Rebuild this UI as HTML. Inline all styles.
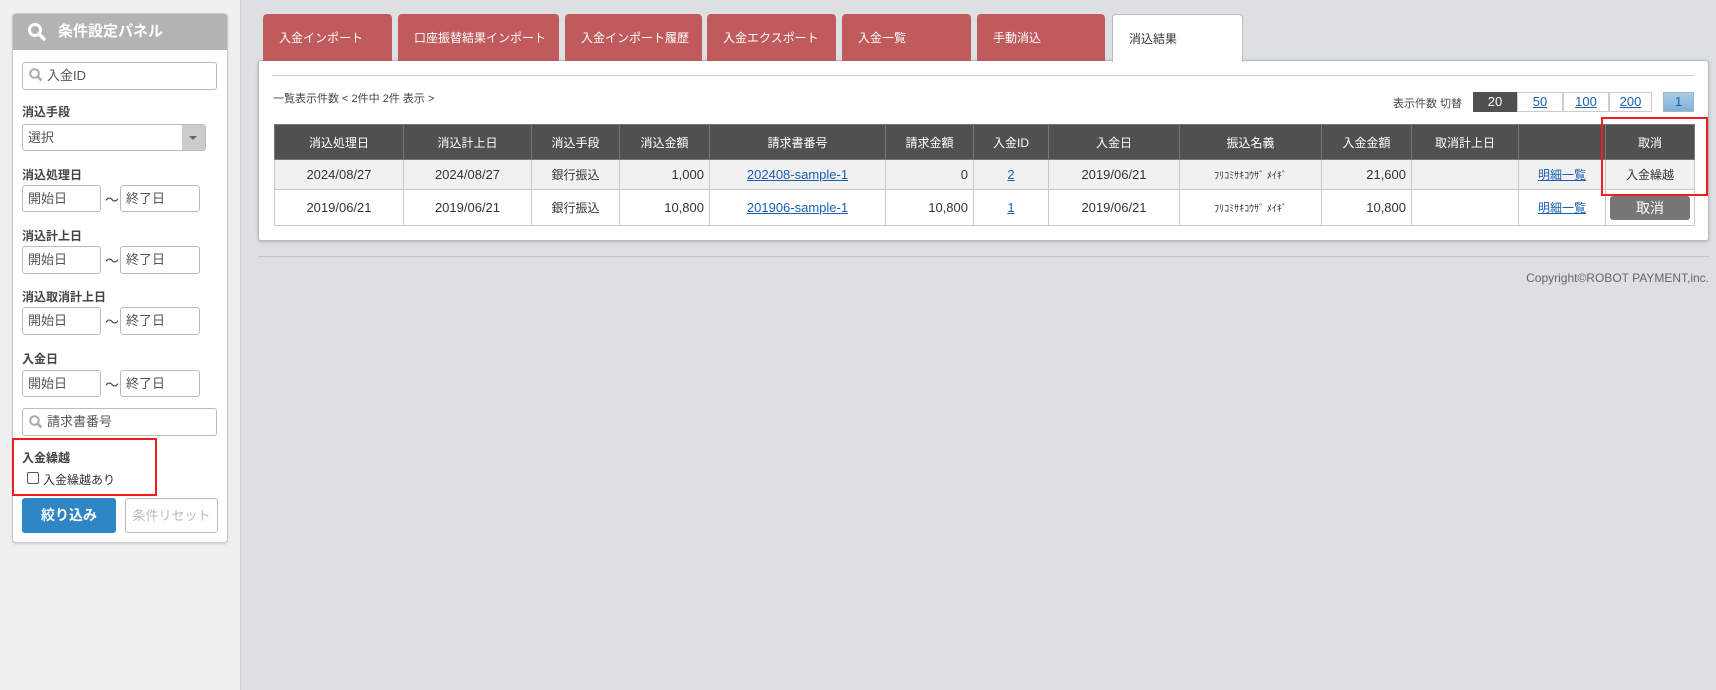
<!DOCTYPE html>
<html><head><meta charset="utf-8"><style>
*{box-sizing:border-box;margin:0;padding:0}
body{width:1716px;height:690px;background:#dce0e3;font-family:"Liberation Sans","Noto Sans CJK JP",sans-serif;color:#333;position:relative;overflow:hidden;font-size:12px}
.abs{position:absolute}
.side{left:0;top:0;width:241px;height:690px;background:#f0f0f0;border-right:1px solid #d0d0d0}
.panel{left:12px;top:13px;width:216px;height:530px;background:#fff;border:1px solid #ccc;border-radius:4px;box-shadow:0 1px 2px rgba(0,0,0,.15)}
.ph{left:0;top:0;width:214px;height:36px;background:#b3b3b3;border-radius:3px 3px 0 0;color:#fff;font-weight:bold;font-size:15px;line-height:36px;padding-left:45px}
.inp{background:#fff;border:1px solid #bbb;border-radius:3px;font-size:13px;color:#555;line-height:26px;padding-left:5px}
.lbl{font-size:12px;font-weight:bold;color:#444}
.til{font-size:14px;color:#444}
.tab{top:14px;height:47px;background:#c05a5c;border-radius:4px 4px 0 0;color:#fff;font-size:12px;padding:15px 0 0 16px}
.card{left:258px;top:60px;width:1451px;height:181px;background:#fff;border:1px solid #bbb;border-radius:3px;box-shadow:0 1px 3px rgba(0,0,0,.2)}
table{border-collapse:collapse;position:absolute;left:274px;top:124px;table-layout:fixed}
td,th{border:1px solid #c8c8c8;font-size:12px;text-align:center;padding:0 5px}
th{background:#505050;color:#fff;height:35px;font-weight:normal;border-color:#777}
td{height:30px;font-size:13px}
tr.g td{background:#f1f1f1}
.r{text-align:right}
a{color:#1a5fb0;text-decoration:underline}
.pg{top:92px;height:20px;border:1px solid #ccc;text-align:center;line-height:18px;font-size:13px}
</style></head><body>
<div class="abs side"></div>
<div class="abs panel">
<div class="abs ph">条件設定パネル</div>
<svg class="abs" style="left:14px;top:8px" width="20" height="20" viewBox="0 0 20 20"><circle cx="8" cy="8" r="5.5" stroke="#fff" stroke-width="3" fill="none"/><path d="M12 12l5 5" stroke="#fff" stroke-width="3.5" stroke-linecap="round"/></svg>
</div>
<div class="abs inp" style="left:22px;top:62px;width:195px;height:28px;padding-left:24px">入金ID</div>
<div class="abs lbl" style="left:22px;top:103px">消込手段</div>
<div class="abs inp" style="left:22px;top:124px;width:184px;height:27px;font-size:13px">選択</div>
<div class="abs" style="left:182px;top:125px;width:23px;height:25px;background:#ccc"></div>
<div class="abs" style="left:189px;top:136px;border-left:4px solid transparent;border-right:4px solid transparent;border-top:4px solid #666"></div>
<div class="abs lbl" style="left:22px;top:166px">消込処理日</div>
<div class="abs lbl" style="left:22px;top:227px">消込計上日</div>
<div class="abs lbl" style="left:22px;top:288px">消込取消計上日</div>
<div class="abs lbl" style="left:22px;top:350px">入金日</div>
<div class="abs inp" style="left:22px;top:185px;width:79px;height:27px">開始日</div><div class="abs til" style="left:105px;top:190px">〜</div><div class="abs inp" style="left:120px;top:185px;width:80px;height:27px">終了日</div>
<div class="abs inp" style="left:22px;top:246px;width:79px;height:28px">開始日</div><div class="abs til" style="left:105px;top:251px">〜</div><div class="abs inp" style="left:120px;top:246px;width:80px;height:28px">終了日</div>
<div class="abs inp" style="left:22px;top:307px;width:79px;height:28px">開始日</div><div class="abs til" style="left:105px;top:312px">〜</div><div class="abs inp" style="left:120px;top:307px;width:80px;height:28px">終了日</div>
<div class="abs inp" style="left:22px;top:370px;width:79px;height:27px">開始日</div><div class="abs til" style="left:105px;top:375px">〜</div><div class="abs inp" style="left:120px;top:370px;width:80px;height:27px">終了日</div>
<div class="abs inp" style="left:22px;top:408px;width:195px;height:28px;padding-left:24px">請求書番号</div>
<svg class="abs" style="left:28px;top:67px" width="16" height="16" viewBox="0 0 16 16"><circle cx="6.5" cy="6.5" r="4.3" stroke="#aaa" stroke-width="2" fill="none"/><path d="M9.5 9.5l4 4" stroke="#aaa" stroke-width="2.5"/></svg>
<svg class="abs" style="left:28px;top:414px" width="16" height="16" viewBox="0 0 16 16"><circle cx="6.5" cy="6.5" r="4.3" stroke="#aaa" stroke-width="2" fill="none"/><path d="M9.5 9.5l4 4" stroke="#aaa" stroke-width="2.5"/></svg>
<div class="abs lbl" style="left:22px;top:449px">入金繰越</div>
<div class="abs" style="left:27px;top:472px;width:12px;height:12px;border:1px solid #555;border-radius:2px;background:#fff"></div>
<div class="abs" style="left:43px;top:471px;font-size:12px;color:#333">入金繰越あり</div>
<div class="abs" style="left:12px;top:438px;width:145px;height:58px;border:2px solid #f01e1e"></div>
<div class="abs" style="left:22px;top:498px;width:94px;height:35px;background:#2f86c6;border-radius:3px;color:#fff;font-size:14px;text-align:center;line-height:35px;font-weight:bold">絞り込み</div>
<div class="abs" style="left:125px;top:498px;width:93px;height:35px;background:#fff;border:1px solid #bbb;border-radius:3px;color:#bbb;font-size:13px;text-align:center;line-height:33px">条件リセット</div>

<div class="abs card"></div>
<div class="abs tab" style="left:263px;width:129px">入金インポート</div>
<div class="abs tab" style="left:398px;width:161px">口座振替結果インポート</div>
<div class="abs tab" style="left:565px;width:137px">入金インポート履歴</div>
<div class="abs tab" style="left:707px;width:129px">入金エクスポート</div>
<div class="abs tab" style="left:842px;width:129px">入金一覧</div>
<div class="abs tab" style="left:977px;width:128px">手動消込</div>
<div class="abs tab" style="left:1112px;width:131px;height:48px;background:#fff;border:1px solid #bbb;border-bottom:none;color:#333">消込結果</div>
<div class="abs" style="left:272px;top:75px;width:1422px;height:1px;background:#ccc"></div>
<div class="abs" style="left:273px;top:90px;font-size:11px;color:#444">一覧表示件数 &lt; 2件中 2件 表示 &gt;</div>
<div class="abs" style="left:1393px;top:95px;font-size:11px;color:#444">表示件数 切替</div>
<div class="abs pg" style="left:1473px;width:44px;background:#505050;color:#fff;border-color:#505050">20</div>
<div class="abs pg" style="left:1517px;width:46px;background:#fff"><a>50</a></div>
<div class="abs pg" style="left:1563px;width:46px;background:#fff"><a>100</a></div>
<div class="abs pg" style="left:1609px;width:43px;background:#fff"><a>200</a></div>
<div class="abs pg" style="left:1663px;width:31px;background:linear-gradient(#a8cbe6,#7fb0d8);color:#1a5fb0;border-color:#9bb">1</div>
<table>
<colgroup><col style="width:129px"><col style="width:128px"><col style="width:88px"><col style="width:90px"><col style="width:176px"><col style="width:88px"><col style="width:75px"><col style="width:131px"><col style="width:142px"><col style="width:90px"><col style="width:107px"><col style="width:87px"><col style="width:89px"></colgroup>
<tr><th>消込処理日</th><th>消込計上日</th><th>消込手段</th><th>消込金額</th><th>請求書番号</th><th>請求金額</th><th>入金ID</th><th>入金日</th><th>振込名義</th><th>入金金額</th><th>取消計上日</th><th></th><th>取消</th></tr>
<tr class="g"><td>2024/08/27</td><td>2024/08/27</td><td style="font-size:12px">銀行振込</td><td class="r">1,000</td><td><a>202408-sample-1</a></td><td class="r">0</td><td><a>2</a></td><td>2019/06/21</td><td style="font-size:10px">ﾌﾘｺﾐｻｷｺｳｻﾞ ﾒｲｷﾞ</td><td class="r">21,600</td><td></td><td style="font-size:12px"><a>明細一覧</a></td><td style="font-size:12px">入金繰越</td></tr>
<tr><td style="height:36px">2019/06/21</td><td>2019/06/21</td><td style="font-size:12px">銀行振込</td><td class="r">10,800</td><td><a>201906-sample-1</a></td><td class="r">10,800</td><td><a>1</a></td><td>2019/06/21</td><td style="font-size:10px">ﾌﾘｺﾐｻｷｺｳｻﾞ ﾒｲｷﾞ</td><td class="r">10,800</td><td></td><td style="font-size:12px"><a>明細一覧</a></td><td style="padding:0 4px"><div style="background:#777;color:#fff;border-radius:3px;height:24px;line-height:24px;font-size:14px">取消</div></td></tr>
</table>
<div class="abs" style="left:1601px;top:117px;width:107px;height:79px;border:2px solid #f01e1e"></div>
<div class="abs" style="left:258px;top:256px;width:1451px;height:1px;background:#c4c4c4"></div>
<div class="abs" style="right:7px;top:271px;font-size:12px;color:#666">Copyright©ROBOT PAYMENT,inc.</div>
</body></html>
